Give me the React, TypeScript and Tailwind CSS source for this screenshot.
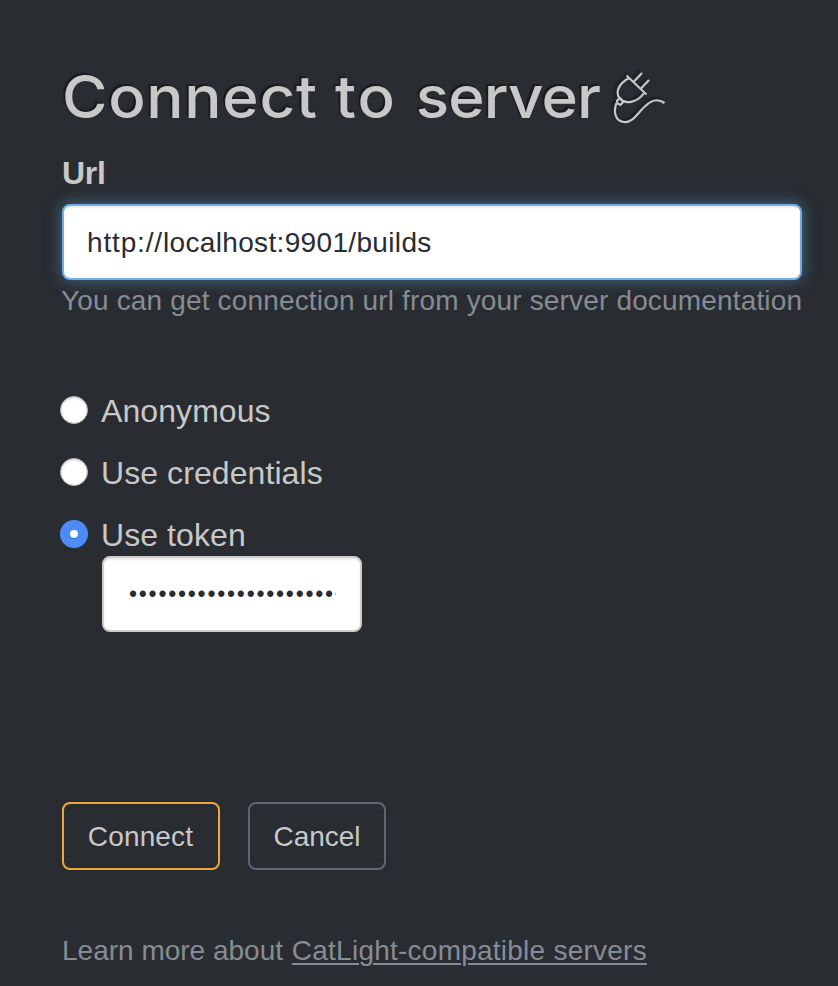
import { useState } from "react";

function PlugIcon() {
  return (
    <svg width="54" height="56" viewBox="0 0 54 56" fill="none" stroke="#c8c8c8" strokeWidth="2.2" className="ml-[10px] mt-2 shrink-0 [filter:drop-shadow(-2px_-2px_1px_#191b1f)]">
      <path d="M14.500 6.500L34.500 25.500" />
      <path d="M17 9C6 15 3 24 8 30C14 36 26 33 32 24" />
      <path d="M21.500 13L30 4M29 19.500L37 11" />
      <path d="M5 31.500L8 29L11.500 32.500L8.500 36L5.500 34.500Z" />
      <path d="M4.500 34C1 43 3.500 52.500 12 53C21 54 26 43 34 36.500C40 30.500 47 30 52.500 34" />
    </svg>
  );
}

function Choice({ label, selected, onSelect }: { label: string; selected: boolean; onSelect: () => void }) {
  return (
    <label className="flex h-[62px] items-center text-[32px] leading-[40px] tracking-[0.08px]">
      <input type="radio" name="auth" checked={selected} onChange={onSelect} className="sr-only" />
      <span className={selected
        ? "-ml-0.5 mr-[13px] flex size-7 -translate-y-px items-center justify-center rounded-full bg-[#4d8bf9]"
        : "-ml-0.5 mr-[13px] flex size-7 -translate-y-px items-center justify-center rounded-full border border-[#b5b5b5] bg-white shadow-[inset_0_1px_2px_#ccc]"}>
        {selected && <span className="size-2 rounded-full bg-white shadow-[0_1px_1px_#2867cf]" />}
      </span>
      {label}
    </label>
  );
}

export default function App() {
  const [choice, setChoice] = useState("Use token");
  return (
    <main className="h-[986px] w-[838px] overflow-hidden bg-[#292c31] px-[62px] pt-[61px] font-['Liberation_Sans',sans-serif] text-[28px] leading-[40px] text-[#c8c8c8]">
      <div className="flex h-[72px] items-start">
        <h1 className="w-[540px] shrink-0 origin-left scale-x-[1.05] whitespace-nowrap font-['Inter',sans-serif] text-[59px] font-medium leading-[72px] [text-shadow:-2px_-2px_1px_#191b1f]">
          <span className="tracking-[0.7px]">Connect </span>
          <span className="tracking-[2px]">to </span>
          <span className="tracking-[-0.8px]">server</span>
        </h1>
        <PlugIcon />
      </div>
      <div className="mt-5 text-[32px] font-bold leading-[40px] tracking-[-0.3px]">Url</div>
      <div className="mt-[11px] flex h-[76px] w-[740px] items-center rounded-lg border-2 border-[#73ace5] bg-white px-[23px] pt-px tracking-[0.34px] text-[#292c31] shadow-[inset_0_2px_2px_#00000013,0_0_16px_#66afe980]"><span className="tracking-[0.85px]">http://</span>localhost:9901/builds</div>
      <p className="-ml-px mt-px whitespace-nowrap tracking-[0.16px] text-[#868c94]">You can get connection url from your server documentation</p>
      <div className="mt-[59px]">
        {["Anonymous", "Use credentials", "Use token"].map((item) => (
          <Choice key={item} label={item} selected={item === choice} onSelect={() => setChoice(item)} />
        ))}
      </div>
      <div className="-mt-[10px] ml-10 flex h-[76px] w-[260px] items-center rounded-lg border-2 border-[#ccc] bg-white px-6 text-[#292c31] shadow-[inset_0_2px_2px_#00000013]">
        <span className="w-[208px] overflow-hidden whitespace-nowrap pl-px text-[23px] tracking-[1.75px]">••••••••••••••••••••••</span>
      </div>
      <div className="mt-[170px] flex gap-7">
        <button className="h-[68px] w-[158px] rounded-lg border-2 border-[#eba93e] pr-px pt-0.5 tracking-[0.15px]">Connect</button>
        <button className="h-[68px] w-[138px] rounded-lg border-2 border-[#606478] pt-0.5">Cancel</button>
      </div>
      <p className="mt-[61px] whitespace-nowrap text-[#868c94]">Learn more about <a className="ml-px tracking-[0.24px] underline decoration-2 underline-offset-[3px]">CatLight-compatible servers</a></p>
    </main>
  );
}
